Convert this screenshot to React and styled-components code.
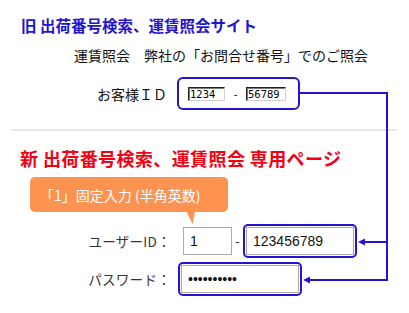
import React from "react";
import styled, { createGlobalStyle } from "styled-components";

const BLUE = "#2314d2";

const Global = createGlobalStyle`
  html, body { margin: 0; padding: 0; background: #fff; }
  * { box-sizing: border-box; }
`;

const Page = styled.div`
  position: relative;
  width: 409px;
  height: 313px;
  overflow: hidden;
  background: #fff;
  font-family: "Noto Sans CJK JP", "Noto Sans", sans-serif;
  display: flex;
  flex-direction: column;
`;

const Title = styled.h1`
  margin: ${(p) => p.$top}px 0 0 ${(p) => p.$left}px;
  font-size: ${(p) => p.$size}px;
  line-height: ${(p) => p.$line}px;
  letter-spacing: ${(p) => p.$spacing}px;
  color: ${(p) => p.$color};
  font-weight: 700;
  white-space: nowrap;
`;

const Notice = styled.p`
  margin: 10px 0 0 74px;
  font-size: 14px;
  line-height: 20px;
  color: #111;
  white-space: nowrap;
`;

const OldRow = styled.div`
  display: flex;
  align-items: center;
  gap: 10px;
  margin: 12px 0 0 97px;
`;

const OldLabel = styled.span`
  width: 70px;
  font-size: 14px;
  line-height: 20px;
  color: #111;
  white-space: nowrap;
`;

const OldBox = styled.div`
  display: flex;
  align-items: center;
  width: 123px;
  height: 33px;
  padding-left: 9px;
  border: 2px solid ${BLUE};
  border-radius: 6px;
`;

const ClassicInput = styled.input`
  width: ${(p) => p.$width}px;
  height: 14px;
  padding: 0 0 0 1px;
  margin: 0;
  border: 1px solid;
  border-color: #222 #d0d0d0 #d0d0d0 #222;
  box-shadow: inset 1px 1px 0 #7a7a7a;
  font-family: "DejaVu Sans Mono", monospace;
  font-size: 10.5px;
  line-height: 12px;
  color: #000;
  background: #fff;
  outline: none;
`;

const OldDash = styled.span`
  width: 21px;
  text-align: center;
  font-family: "Liberation Sans", sans-serif;
  font-size: 11px;
  color: #111;
`;

const Divider = styled.hr`
  margin: 19px 12px 0 11px;
  height: 2px;
  border: none;
  background: #e6e6e6;
`;

const Tooltip = styled.div`
  position: relative;
  display: flex;
  align-items: center;
  width: 198px;
  height: 35px;
  margin: 7px 0 0 30px;
  padding-left: 10px;
  border-radius: 5px;
  background: #fd9350;
  color: #fff;
  font-size: 14px;
  white-space: nowrap;

  &::after {
    content: "";
    position: absolute;
    left: 156px;
    top: 34px;
    width: 9px;
    height: 13px;
    background: #fd9350;
    clip-path: polygon(0 0, 100% 0, 75% 100%);
  }
`;

const Form = styled.div`
  display: grid;
  grid-template-columns: 171px auto;
  column-gap: 7px;
  row-gap: 4px;
  align-items: center;
  margin-top: 12px;
`;

const Label = styled.span`
  text-align: right;
  font-size: 13.5px;
  letter-spacing: 0.3px;
  color: #333;
  white-space: nowrap;
`;

const FieldGroup = styled.div`
  display: flex;
  align-items: center;
  padding-left: ${(p) => p.$indent || 0}px;
`;

const Highlight = styled.div`
  padding: 1px;
  border: 2px solid ${BLUE};
  border-radius: 5px;
`;

const TextField = styled.input`
  display: block;
  width: ${(p) => p.$width}px;
  height: 28px;
  margin: 0;
  padding: 0 0 0 6px;
  border: 1px solid #ababab;
  font-family: "Liberation Sans", Arial, sans-serif;
  font-size: 14px;
  color: #111;
  background: #fff;
  outline: none;
`;

const Dash = styled.span`
  width: 11px;
  text-align: center;
  font-family: "Liberation Sans", sans-serif;
  font-size: 13px;
  color: #333;
`;

const Connector = styled.svg`
  position: absolute;
  left: 0;
  top: 0;
  pointer-events: none;
`;

export default function App() {
  return (
    <>
      <Global />
      <Page>
        <Title $top={15} $left={21} $size={15.5} $line={20} $spacing={0} $color={BLUE}>
          旧 出荷番号検索、運賃照会サイト
        </Title>
        <Notice>運賃照会　弊社の「お問合せ番号」でのご照会</Notice>
        <OldRow>
          <OldLabel>お客様ＩＤ</OldLabel>
          <OldBox>
            <ClassicInput $width={37} readOnly value="1234" />
            <OldDash>-</OldDash>
            <ClassicInput $width={40} readOnly value="56789" />
          </OldBox>
        </OldRow>

        <Divider />

        <Title $top={15} $left={20} $size={18} $line={24} $spacing={0.4} $color="#f40014">
          新 出荷番号検索、運賃照会 専用ページ
        </Title>
        <Tooltip>「1」固定入力 (半角英数)</Tooltip>

        <Form>
          <Label>ユーザーID：</Label>
          <FieldGroup $indent={5}>
            <TextField $width={49} readOnly value="1" />
            <Dash>-</Dash>
            <Highlight>
              <TextField $width={108} readOnly value="123456789" />
            </Highlight>
          </FieldGroup>
          <Label>パスワード：</Label>
          <FieldGroup>
            <Highlight>
              <TextField $width={118} type="password" readOnly value="1234567890" />
            </Highlight>
          </FieldGroup>
        </Form>

        <Connector width="409" height="313" viewBox="0 0 409 313">
          <g stroke={BLUE} strokeWidth="2" fill="none">
            <path d="M300 93 H387 V281" />
            <path d="M387 242 H363" />
            <path d="M387 280 H308" />
          </g>
          <g fill={BLUE}>
            <polygon points="358,242 365,238.5 365,245.5" />
            <polygon points="303,280 310,276.5 310,283.5" />
          </g>
        </Connector>
      </Page>
    </>
  );
}
